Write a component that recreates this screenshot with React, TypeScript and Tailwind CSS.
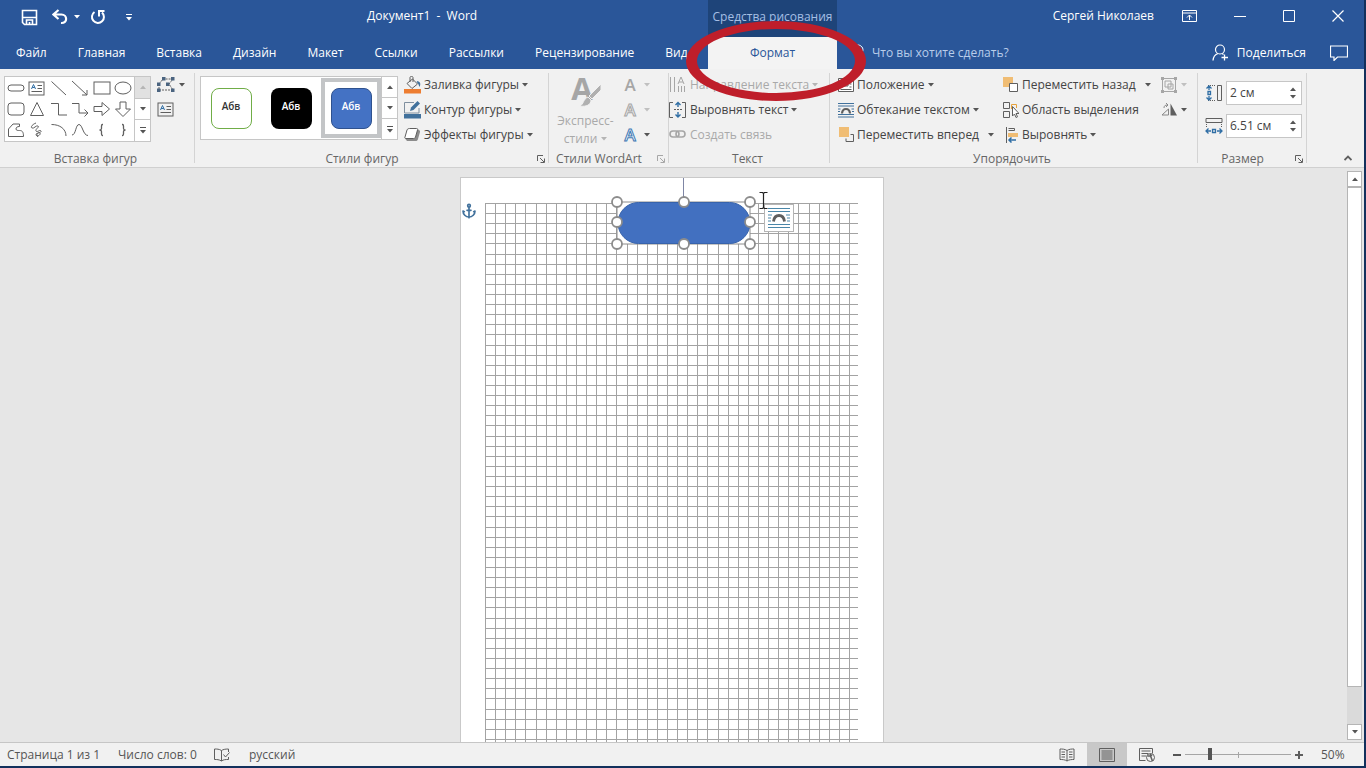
import { useState, type ReactNode } from 'react';
import { Anchor } from 'lucide-react';
import clsx from 'clsx';

const tabs = ['Главная', 'Вставка', 'Дизайн', 'Макет', 'Ссылки', 'Рассылки', 'Рецензирование', 'Вид'];

const GRID_STEP = 10.11;
const columns = Array.from({ length: 37 }, (_, i) => Math.round(i * GRID_STEP));
const rows = Array.from({ length: 54 }, (_, i) => Math.round(i * GRID_STEP));

const shapes: { name: string; draw: ReactNode }[] = [
  { name: 'Скругленный прямоугольник', draw: <rect x="1" y="6" width="16" height="6" rx="3" /> },
  {
    name: 'Надпись',
    draw: (
      <>
        <rect x="1" y="3" width="15" height="13" />
        <path d="M3.5 10 5.500 5.500 7.500 10M4.200 8.500h2.600" stroke="#2f6ea5" />
        <path d="M9.500 6.500h4.500M9.500 9.500h4.500M3.500 12.500h10.500" />
      </>
    ),
  },
  { name: 'Линия', draw: <path d="M1.500 2.500 16 16" /> },
  { name: 'Стрелка', draw: <path d="M1 2 16 16M16 11v5h-5" /> },
  { name: 'Прямоугольник', draw: <rect x="1" y="3" width="16" height="12" /> },
  { name: 'Овал', draw: <ellipse cx="9" cy="9" rx="8" ry="6" /> },
  { name: 'Прямоугольник 2', draw: <rect x="1" y="3" width="16" height="12" rx="3" /> },
  { name: 'Треугольник', draw: <path d="M9 2.500 15.500 15.500h-13z" /> },
  { name: 'Соединитель', draw: <path d="M1 3.500h7.500v11.500H17" /> },
  { name: 'Соединитель со стрелкой', draw: <path d="M1 3.500h7v9.500h9M13.500 9.500 17 13l-3.500 3.500" /> },
  { name: 'Стрелка вправо', draw: <path d="M1 6.500h8v-4l7.500 6.500L9 15.500v-4H1z" /> },
  { name: 'Стрелка вниз', draw: <path d="M6 2h6v7h4.500L9 16.500 1.500 9H6z" /> },
  {
    name: 'Полилиния',
    draw: <path d="M1.500 15.500V8L6 3h6.500v2.500c-2.500 0-3.500 1-3.500 2.500s2 1.500 3.500 1.500c2.500 0 4 1 4 6z" />,
  },
  {
    name: 'Рисованная кривая',
    draw: <path d="M8 2C5 3 2 6 4 7s4-3 6-2-3 3-2 5 4-2 5 0-6 2-5 4 5 0 4-2-5 1-2 4" />,
  },
  { name: 'Дуга', draw: <path d="M1.500 3.500C10 3.500 16 8 16 15" /> },
  { name: 'Кривая', draw: <path d="M1 14c4 0 3.500-10.500 7-10.500S12 14.500 17 14.500" /> },
  {
    name: 'Левая фигурная скобка',
    draw: <path d="M10 3.500H9.500Q8.500 3.500 8.500 5v2.500Q8.500 9 6.500 9 8.500 9 8.500 10.500V13q0 1.500 1 1.500h.5" strokeWidth="1.300" />,
  },
  {
    name: 'Правая фигурная скобка',
    draw: <path d="M8 3.500h.5q1 0 1 1.500v2.500Q9.500 9 11.500 9 9.500 9 9.500 10.500V13q0 1.500-1 1.500H8" strokeWidth="1.300" />,
  },
];

function Svg({ children, className = 'size-[18px]', box = '0 0 18 18' }: { children: ReactNode; className?: string; box?: string }) {
  return (
    <svg viewBox={box} className={clsx('shrink-0', className)} fill="none" stroke="#5f5f5f" aria-hidden="true">
      {children}
    </svg>
  );
}

function Caret({ className = 'text-[#555]' }: { className?: string }) {
  return (
    <svg viewBox="0 0 6 4" className={clsx('h-1 w-1.5 shrink-0', className)} fill="currentColor" aria-hidden="true">
      <path d="M0 0h6L3 3.500z" />
    </svg>
  );
}

function GalleryScroll({ name, dimUp }: { name: string; dimUp?: boolean }) {
  return (
    <div className="flex w-4 flex-col border-l border-[#c6c6c6]">
      <button
        aria-label={`${name}: вверх`}
        className={clsx('flex flex-1 items-center justify-center', dimUp ? 'bg-[#e1e1e1] text-[#b5b5b5]' : 'text-[#555]')}
      >
        <Caret className="rotate-180" />
      </button>
      <button aria-label={`${name}: вниз`} className="flex flex-1 items-center justify-center border-y border-[#c6c6c6]">
        <Caret />
      </button>
      <button aria-label={`${name}: еще`} className="flex flex-1 flex-col items-center justify-center gap-0.5">
        <span className="h-px w-1.5 bg-[#555]" />
        <Caret />
      </button>
    </div>
  );
}

function RibbonButton({ icon, label, caret, disabled, wide }: { icon: ReactNode; label: string; caret?: boolean; disabled?: boolean; wide?: boolean }) {
  return (
    <button
      disabled={disabled}
      className={clsx('flex h-6 items-center gap-[3px] whitespace-nowrap', disabled ? 'text-[#a9a9a9]' : 'text-[#444]')}
    >
      {icon}
      <span>{label}</span>
      {caret && <Caret className={clsx(disabled ? 'text-[#b5b5b5]' : 'text-[#555]', wide && 'ml-1.5')} />}
    </button>
  );
}

function Launcher({ dim }: { dim?: boolean }) {
  return (
    <button aria-label="Параметры группы" className={clsx('absolute right-1 bottom-1', dim && 'opacity-50')}>
      <Svg className="size-2" box="0 0 8 8">
        <path d="M.5 6V.5H6M3 3l4 4M7.500 3.500v4h-4" />
      </Svg>
    </button>
  );
}

function Group({ label, width, children, launcher }: { label: string; width: string; children: ReactNode; launcher?: 'on' | 'dim' }) {
  return (
    <section aria-label={label} className={clsx('relative flex shrink-0 flex-col pt-1', width)}>
      <div className="flex h-[78px]">{children}</div>
      <div className={clsx('text-center leading-4 whitespace-nowrap text-[#666]', launcher ? 'pr-5' : 'pr-1')}>{label}</div>
      {launcher && <Launcher dim={launcher === 'dim'} />}
      <span className="absolute top-1 right-0 bottom-1 w-px bg-[#d4d4d4]" />
    </section>
  );
}

function SizeField({ id, label, icon, initial }: { id: string; label: string; icon: ReactNode; initial: string }) {
  const [value, setValue] = useState(initial);
  return (
    <div className="flex items-center gap-[3px]">
      <label htmlFor={id} aria-label={label}>{icon}</label>
      <div className="flex h-6 w-[76px] border border-[#c6c6c6] bg-white">
        <input
          id={id}
          value={value}
          onChange={(e) => setValue(e.target.value)}
          className="w-[58px] bg-transparent pl-[3px] text-[#444] outline-none"
        />
        <div className="flex flex-1 flex-col items-center justify-evenly">
          <button aria-label={`${label}: больше`}><Caret className="rotate-180 text-[#555]" /></button>
          <button aria-label={`${label}: меньше`}><Caret /></button>
        </div>
      </div>
    </div>
  );
}

function TitleBar() {
  return (
    <header className="flex h-[69px] shrink-0 bg-[#2a5699] text-white">
      <div className="flex w-[708px] shrink-0 flex-col">
        <div className="flex h-8 items-center">
          <div className="flex w-[367px] items-center pt-0.5 pl-[21px]">
            <button aria-label="Сохранить">
              <Svg className="size-[17px]" box="0 0 17 17">
                <path d="M1.500 1.500h14v14h-12l-2-2zM1.500 8.500h14M5.500 15.500v-4.500h6v4.500M8.500 13v2.500" stroke="#fff" strokeWidth="1.600" />
              </Svg>
            </button>
            <button aria-label="Отменить" className="ml-3.5 flex items-center gap-1.5">
              <Svg className="size-4" box="0 0 16 16">
                <path d="M6.500 1 1.500 5.500l5 4.500M2 5.500h7.500c6 0 6.500 9-.5 8.500" stroke="#fff" strokeWidth="2.200" />
              </Svg>
              <Caret className="text-white" />
            </button>
            <button aria-label="Повторить" className="ml-2.5">
              <Svg className="size-4" box="0 0 16 16">
                <path d="M4.500 3a6 6 0 1 0 7.500.5M9 7.500V2h5.500" stroke="#fff" strokeWidth="2" />
              </Svg>
            </button>
            <button aria-label="Настройка панели быстрого доступа" className="ml-5 flex flex-col items-center gap-0.5">
              <span className="h-px w-1.5 bg-white" />
              <Caret className="text-white" />
            </button>
          </div>
          <h1 className="whitespace-pre">Документ1  -  Word</h1>
        </div>
        <nav className="flex h-[37px] items-center gap-[31px] pt-1 pl-4">
          <button>Файл</button>
          {tabs.map((tab) => (
            <button key={tab}>{tab}</button>
          ))}
        </nav>
      </div>

      <div className="relative flex w-[129px] shrink-0 flex-col bg-[#1e4479]">
        <div className="flex h-[37px] items-center justify-center pb-1 whitespace-nowrap text-[#a5bfe4]">Средства рисования</div>
        <button className="flex-1 bg-[#f3f3f3] text-[#2a5699]">Формат</button>
        <svg viewBox="0 0 180 80" className="pointer-events-none absolute top-[21px] -left-[22px] z-20 h-20 w-[180px]" aria-hidden="true">
          <path
            fill="#bf1e2a"
            fillRule="evenodd"
            d="M0 40a90 40 0 1 0 180 0a90 40 0 1 0-180 0zM11 40a79 32 0 1 0 158 0a79 32 0 1 0-158 0z"
          />
        </svg>
      </div>

      <div className="flex flex-1 flex-col">
        <div className="flex h-8 items-center justify-end pr-5">
          <span>Сергей Николаев</span>
          <button aria-label="Параметры отображения ленты" className="ml-7">
            <Svg className="h-3 w-[15px]" box="0 0 15 12">
              <path d="M.5.5h14v11H.5zM.5 3h14M7.500 10V5M5 7.500 7.500 5 10 7.500" stroke="#fff" />
            </Svg>
          </button>
          <button aria-label="Свернуть" className="ml-[37px]">
            <Svg className="h-3 w-3" box="0 0 12 12"><path d="M0 6.500h12" stroke="#fff" /></Svg>
          </button>
          <button aria-label="Развернуть" className="ml-[37px]">
            <Svg className="h-3 w-3" box="0 0 12 12"><path d="M.5.5h11v11H.5z" stroke="#fff" /></Svg>
          </button>
          <button aria-label="Закрыть" className="ml-[37px]">
            <Svg className="h-3 w-3" box="0 0 12 12"><path d="m.5.5 11 11M11.500.5l-11 11" stroke="#fff" strokeWidth="1.200" /></Svg>
          </button>
        </div>
        <div className="flex h-[37px] items-center pt-1 pr-4 pl-[15px]">
          <button className="flex items-center gap-2 text-[#b9cdea]">
            <Svg className="h-[18px] w-3" box="0 0 12 18">
              <path d="M3.500 13v-2.500C-1.500 6 2 1 6 1s7.500 5 2.500 9.500V13zM4 15.500h4" stroke="#fff" />
            </Svg>
            Что вы хотите сделать?
          </button>
          <button className="ml-auto flex items-center gap-2">
            <Svg className="size-[17px]" box="0 0 17 17">
              <circle cx="8" cy="5.500" r="4.500" stroke="#fff" strokeWidth="1.200" />
              <path d="M1 16.500c.3-4 2-6 5-7M10 9.500l1.500 1M12.500 10.500v6M9.500 13.500h6.500" stroke="#fff" strokeWidth="1.300" />
            </Svg>
            Поделиться
          </button>
          <button aria-label="Примечания" className="ml-6">
            <Svg className="h-4 w-[18px]" box="0 0 18 16">
              <path d="M.5 1h17v11H7.500L4 15.500V12H.5z" stroke="#fff" strokeWidth="1.200" />
            </Svg>
          </button>
        </div>
      </div>
    </header>
  );
}

function InsertShapes() {
  return (
    <Group label="Вставка фигур" width="w-[195px]">
      <div className="mt-[3px] ml-1 flex h-[66px] w-[147px] border border-[#c6c6c6] bg-white">
        <div className="grid flex-1 grid-cols-6 grid-rows-3">
          {shapes.map((shape) => (
            <button key={shape.name} aria-label={shape.name} className="flex items-center justify-center">
              <Svg>{shape.draw}</Svg>
            </button>
          ))}
        </div>
        <GalleryScroll name="Фигуры" dimUp />
      </div>
      <div className="ml-1.5 flex flex-col gap-1.5 pt-[3px]">
        <button aria-label="Изменить фигуру" className="flex items-center gap-1">
          <Svg>
            <path d="M2 8 6 3h10l-4 5 4 6H2z" strokeDasharray="2 1" />
            <path d="M0 6.500h3.500V10H0zM5 1h3.500v3.500H5zM14 1h3.500v3.500H14zM9 6.500h3.500V10H9zM0 12.500h3.500V16H0zM14 12.500h3.500V16H14z" fill="#4b6480" stroke="none" />
          </Svg>
          <Caret />
        </button>
        <button aria-label="Нарисовать надпись"><Svg>{shapes[1].draw}</Svg></button>
      </div>
    </Group>
  );
}

function ShapeStyles() {
  return (
    <Group label="Стили фигур" width="w-[354px]" launcher="on">
      <div className="mt-[3px] ml-[5px] flex h-16 w-[198px] border border-[#c6c6c6] bg-white">
        <div className="flex flex-1 items-center text-[10px] font-semibold">
          <button className="flex h-[60px] w-[60px] items-center justify-center">
            <span className="flex size-[41px] items-center justify-center rounded-lg border border-[#70ad47] pb-1 text-[#333]">Абв</span>
          </button>
          <button className="flex h-[60px] w-[60px] items-center justify-center">
            <span className="flex size-[41px] items-center justify-center rounded-lg bg-black pb-1 text-white">Абв</span>
          </button>
          <button aria-pressed="true" className="flex h-[60px] w-[60px] items-center justify-center border-4 border-[#c3c5c7]">
            <span className="flex size-[41px] items-center justify-center rounded-lg border border-[#2f528f] bg-[#4472c4] pb-1 text-white">Абв</span>
          </button>
        </div>
        <GalleryScroll name="Стили" />
      </div>
      <div className="ml-[6px] flex flex-col gap-px">
        <RibbonButton
          label="Заливка фигуры"
          caret
          icon={
            <Svg className="h-[18px] w-[17px]" box="0 0 17 18">
              <path d="M3 7.500 8.500 3l5 5L8 12.500zM6 6V1.500c0-1.500 3-1.500 3 0V6" />
              <path d="M13.500 5c3 1 3.500 3 2 6-1-2-1-4-3-5z" fill="#41719c" stroke="none" />
              <path d="M0 13h17v4.500H0z" fill="#ed7d31" stroke="none" />
            </Svg>
          }
        />
        <RibbonButton
          label="Контур фигуры"
          caret
          icon={
            <Svg className="h-[18px] w-[17px]" box="0 0 17 18">
              <path d="M10 1.500H.500v10.500H15V7" stroke="#7f8f9f" />
              <path d="m6 10 1-3.500L13.500 0l2.500 2.500L9.500 9z" fill="#41719c" stroke="none" />
              <path d="M0 13h17v4.500H0z" fill="#41719c" stroke="none" />
            </Svg>
          }
        />
        <RibbonButton
          label="Эффекты фигуры"
          caret
          icon={
            <Svg className="h-[18px] w-[17px]" box="0 0 17 18">
              <path d="M1 12.500 3 15h8.500c1.500 0 2-.5 2.500-2l2-7c.3-1-.5-2-2-2.500z" fill="#8c8c8c" stroke="none" />
              <path d="M5.500 2.500h7c1 0 1.500.5 1 1.500l-2 7c-.3 1-1 1.500-2 1.500H2c-1 0-1.500-.5-1-1.500l2-7c.3-1 1.500-1.500 2.500-1.500z" fill="#fff" />
            </Svg>
          }
        />
      </div>
    </Group>
  );
}

function LetterIcon({ fill, stroke }: { fill: string; stroke: string }) {
  return (
    <svg viewBox="0 0 16 16" className="size-4 overflow-visible" aria-hidden="true">
      <text x="8" y="14" textAnchor="middle" fontSize="17" fontWeight="600" fill={fill} stroke={stroke}>A</text>
    </svg>
  );
}

function WordArtStyles() {
  return (
    <Group label="Стили WordArt" width="w-[120px]" launcher="dim">
      <button disabled className="flex w-[73px] flex-col items-center pt-[3px] leading-[18px] text-[#a9a9a9]">
        <svg viewBox="0 0 32 32" className="size-8 overflow-visible" aria-hidden="true">
          <text x="12" y="24" textAnchor="middle" fontSize="31" fontWeight="700" fill="#a6a6a6">A</text>
          <path d="M31 8v6l-9 9-3-3zM18 21l3 3c0 5-5 7-11 6 4-2 3-7 8-9z" fill="#b0b0b0" stroke="#f1f1f1" />
        </svg>
        <span className="mt-1">Экспресс-</span>
        <span className="flex items-center gap-1">стили <Caret className="text-[#b5b5b5]" /></span>
      </button>
      <div className="flex flex-col gap-px">
        <button disabled aria-label="Заливка текста" className="flex h-6 items-center gap-1.5">
          <LetterIcon fill="#a6a6a6" stroke="none" /><Caret className="text-[#c0c0c0]" />
        </button>
        <button disabled aria-label="Контур текста" className="flex h-6 items-center gap-1.5">
          <LetterIcon fill="#f1f1f1" stroke="#a6a6a6" /><Caret className="text-[#c0c0c0]" />
        </button>
        <button aria-label="Текстовые эффекты" className="flex h-6 items-center gap-1.5">
          <LetterIcon fill="#fff" stroke="#3c78b4" /><Caret />
        </button>
      </div>
    </Group>
  );
}

function TextGroup() {
  return (
    <Group label="Текст" width="w-[161px]">
      <div className="flex flex-col gap-px">
        <RibbonButton
          label="Направление текста"
          caret
          disabled
          icon={
            <Svg>
              <path d="M1.500 1v15M5.500 1v15M9.500 10v6M12.500 10v6M15.500 10v6M9 8l3-7 3 7M10 6h4" stroke="#a6a6a6" />
            </Svg>
          }
        />
        <RibbonButton
          label="Выровнять текст"
          caret
          icon={
            <Svg>
              <path d="M4 1.500H.500v15H4M13 1.500h3.500v15H13" />
              <path d="M5 8.500h8" strokeDasharray="2 1" />
              <path d="M9 2v4M9 11v5M6.500 4 9 1.500 11.500 4M6.500 13.500 9 16l2.500-2.500" stroke="#2f6ea5" strokeWidth="1.400" />
            </Svg>
          }
        />
        <RibbonButton
          label="Создать связь"
          disabled
          icon={
            <Svg>
              <rect x="1" y="5" width="9" height="6" rx="3" stroke="#a6a6a6" strokeWidth="1.600" />
              <rect x="7" y="5" width="9" height="6" rx="3" stroke="#a6a6a6" strokeWidth="1.600" />
            </Svg>
          }
        />
      </div>
    </Group>
  );
}

function Arrange() {
  return (
    <Group label="Упорядочить" width="w-[368px]">
      <div className="ml-2 flex w-[165px] flex-col gap-px">
        <RibbonButton
          label="Положение"
          caret
          icon={
            <Svg className="size-4" box="0 0 16 16">
              <path d="M.5 1.500h15v13H.5z" fill="#fff" />
              <path d="M2.500 4h2M11.500 4h2M2.500 7h2M11.500 7h2M2.500 10h2M11.500 10h2M2.500 12.500h11" />
              <path d="M6 4h4v5H6z" />
            </Svg>
          }
        />
        <RibbonButton
          label="Обтекание текстом"
          caret
          icon={
            <Svg className="size-4" box="0 0 16 16">
              <path d="M0 1.500h16M0 4h16M0 12.500h16M0 15h16M0 7h2.500M13.500 7H16M0 9.500h2M14 9.500h2" stroke="#41719c" />
              <path d="M4 11.500c.5-6 7.500-6 8 0" strokeWidth="2.200" />
            </Svg>
          }
        />
        <RibbonButton
          label="Переместить вперед"
          caret
          wide
          icon={
            <Svg className="size-4" box="0 0 16 16">
              <path d="M1 0h10v10H1z" fill="#f0bd74" stroke="none" />
              <path d="M12.500 7.500h3v7H8V11.500" />
            </Svg>
          }
        />
      </div>
      <div className="flex w-[158px] flex-col gap-px">
        <RibbonButton
          label="Переместить назад"
          caret
          wide
          icon={
            <Svg className="size-4" box="0 0 16 16">
              <path d="M0 0h10v10H0z" fill="#f0bd74" stroke="none" />
              <path d="M6.500 6.500h8v8h-8z" fill="#fff" />
            </Svg>
          }
        />
        <RibbonButton
          label="Область выделения"
          icon={
            <Svg className="size-4" box="0 0 16 16">
              <path d="M.5.500h6v6h-6zM.5 9.500h6v6h-6z" />
              <path d="M8.500 7V2.500h5V6" stroke="#e8a33d" />
              <path d="M9.500 4.500v9.500l2-2 1.500 3.500 1.500-.7-1.500-3.300h3z" fill="#fff" />
            </Svg>
          }
        />
        <RibbonButton
          label="Выровнять"
          caret
          icon={
            <Svg className="size-4" box="0 0 16 16">
              <path d="M3.500 0v16M5.500 1.500h6v2h-6" />
              <path d="M5 6h10v4H5z" fill="#f0bd74" stroke="none" />
              <path d="M13 13H6M8.500 10.500 6 13l2.500 2.500" stroke="#2f6ea5" strokeWidth="1.500" />
            </Svg>
          }
        />
      </div>
      <div className="flex flex-col gap-px">
        <button disabled aria-label="Группировать" className="flex h-6 items-center gap-1">
          <Svg className="size-4" box="0 0 16 16">
            <path d="M1.500 1.500h13v13h-13zM4 4h6v6H4zM7 7h5v5H7z" stroke="#a6a6a6" />
            <path d="M0 0h3v3H0zM13 0h3v3h-3zM0 13h3v3H0zM13 13h3v3h-3z" fill="#a6a6a6" stroke="none" />
          </Svg>
          <Caret className="text-[#c0c0c0]" />
        </button>
        <button aria-label="Повернуть" className="flex h-6 items-center gap-1">
          <Svg className="size-4" box="0 0 16 16">
            <path d="M9.500 1.500 16 13.500H9.500z" fill="#5f5f5f" stroke="none" />
            <path d="M1 13h6.500V7zM3 6c0-2 1-3 3.500-3M5 1l2 2-2 2" stroke="#888" />
          </Svg>
          <Caret />
        </button>
      </div>
    </Group>
  );
}

function SizeGroup() {
  return (
    <Group label="Размер" width="w-[109px]" launcher="on">
      <div className="ml-[7px] flex flex-col gap-[9px] pt-2">
        <SizeField
          id="height"
          label="Высота фигуры"
          initial="2 см"
          icon={
            <Svg>
              <path d="M12.500 1.500h4v15h-4z" />
              <path d="M3 1.500h8M3 16.500h8" strokeDasharray="1 1" />
              <path d="M4 2v4M4 12v4M1.500 4.500 4 2l2.500 2.500M1.500 13.500 4 16l2.500-2.500M3 7.500h2.500v3H3z" stroke="#2f6ea5" strokeWidth="1.300" />
            </Svg>
          }
        />
        <SizeField
          id="width"
          label="Ширина фигуры"
          initial="6.51 см"
          icon={
            <Svg>
              <path d="M1 1.500h16v4H1z" />
              <path d="M1.500 7v4M16.500 7v4" strokeDasharray="1 1" />
              <path d="M1 14h5M12 14h5M3.500 11.500 1 14l2.500 2.500M14.500 11.500 17 14l-2.500 2.500M7.500 12.500h3v3h-3z" stroke="#2f6ea5" strokeWidth="1.300" />
            </Svg>
          }
        />
      </div>
    </Group>
  );
}

function SelectedShape() {
  const handles = [[7, 7], [74, 7], [140, 7], [7, 27], [140, 27], [7, 49], [74, 49], [140, 49]];
  return (
    <svg viewBox="0 0 148 80" className="absolute top-0 left-[149px] h-20 w-[148px]" aria-label="Фигура">
      <path d="M73.500 0v24" stroke="#7f86a5" />
      <g transform="translate(0 17)">
        <rect x="7" y="7" width="133" height="42" fill="#fff" stroke="#8c8c8c" />
        <rect x="8" y="7.500" width="132" height="41" rx="20.500" fill="#4270c0" stroke="#3763ab" />
        {handles.map(([x, y]) => (
          <circle key={`${x}-${y}`} cx={x} cy={y} r="5" fill="#fff" stroke="#8c8c8c" strokeWidth="1.800" />
        ))}
      </g>
    </svg>
  );
}

function Document() {
  return (
    <article className="relative mx-auto mt-[9px] w-[424px] shrink-0 overflow-hidden border border-b-0 border-[#c9c9c9] bg-white pt-[25px] pl-[24px]">
      <svg width="375" height="600" className="block" shapeRendering="crispEdges" stroke="#a3a3a3" aria-label="Сетка">
        {columns.map((x) => (
          <path key={x} d={`M${x + 0.5} 0V600`} />
        ))}
        {rows.map((y) => (
          <path key={y} d={`M0 ${y + 0.5}H373`} />
        ))}
      </svg>
      <Anchor className="absolute top-[25px] left-0 size-4 text-[#41719c]" strokeWidth={2.5} />
      <SelectedShape />
      <button aria-label="Параметры разметки" className="absolute top-[26px] left-[303px] flex h-7 w-[30px] items-center justify-center border border-[#b5b5b5] bg-white">
        <Svg className="h-[22px] w-[22px]" box="0 0 22 22">
          <path d="M0 1.500h22M0 4.500h22M0 17.500h22M0 20.500h22M0 8h4M18 8h4M0 11h3M19 11h3M0 14h3M19 14h3" stroke="#4a86a8" />
          <path d="M5.500 14.500c1-8 10-8 11 0" strokeWidth="2.800" />
        </Svg>
      </button>
      <svg viewBox="0 0 9 17" className="absolute top-[14px] left-[298px] h-[17px] w-[9px]" fill="none" stroke="#222" aria-hidden="true">
        <path d="M.5.500h3l1 1 1-1h3M4.500 1v15M.5 16.500h3l1-1 1 1h3" strokeWidth="1.200" />
      </svg>
    </article>
  );
}

function StatusBar() {
  const [zoom, setZoom] = useState(23);
  return (
    <footer className="flex h-6 shrink-0 items-center border-t border-[#c6c6c6] bg-[#f1f1f1] pl-[7px] text-[#555]">
      <span className="w-[111px]">Страница 1 из 1</span>
      <span className="w-24">Число слов: 0</span>
      <button aria-label="Правописание" className="w-[35px]">
        <Svg className="h-[14px] w-4" box="0 0 16 14">
          <path d="M7.500 2.500C5 1 3 1 .5 1v10.500c2.500 0 4.500 0 7 1.500zM7.500 2.500C9 1.500 11 1 14.500 1v3M7.500 13c2-1.500 4-1.500 7-1.500V9M9.500 6.500 11.500 9 15.500 4.500" />
        </Svg>
      </button>
      <span>русский</span>
      <div className="ml-auto flex h-full items-center">
        <button aria-label="Режим чтения" className="flex h-full w-10 items-center justify-center">
          <Svg className="h-[14px] w-4" box="0 0 16 14">
            <path d="M8 2.500C6 1 3 1 1 1v10.500c2 0 5 0 7 1.500 2-1.500 5-1.500 7-1.500V1c-2 0-5 0-7 1.500zM8 2.500V13M2.500 4H6M2.500 6.500H6M2.500 9H6M10 4h3.500M10 6.500h3.500M10 9h3.500" />
          </Svg>
        </button>
        <button aria-label="Разметка страницы" aria-pressed="true" className="flex h-full w-10 items-center justify-center bg-[#c8c8c8]">
          <Svg className="h-[14px] w-4" box="0 0 16 14">
            <path d="M.5.500h15v13H.500zM2.500 3h11M2.500 5h11M2.500 7h11M2.500 9h11M2.500 11h11" />
          </Svg>
        </button>
        <button aria-label="Веб-документ" className="flex h-full w-10 items-center justify-center">
          <Svg className="h-[14px] w-4" box="0 0 16 14">
            <path d="M6.500 12.500h-6V.500h13v5M2.500 3h9M2.500 5.500h7M2.500 8H7" />
            <circle cx="11.500" cy="9.500" r="4" fill="#f1f1f1" />
            <path d="M8.500 8h3l2 5M11 6l2 2" strokeWidth="1.500" />
          </Svg>
        </button>
        <button aria-label="Уменьшить" className="ml-1.5 h-0.5 w-2 bg-[#555]" />
        <div className="relative mx-1 flex w-[106px] items-center">
          <span className="absolute left-[53px] h-1.5 w-px bg-[#a6a6a6]" />
          <input
            type="range"
            aria-label="Масштаб"
            value={zoom}
            onChange={(e) => setZoom(Number(e.target.value))}
            className="h-3 w-full appearance-none bg-transparent [&::-webkit-slider-runnable-track]:h-px [&::-webkit-slider-runnable-track]:bg-[#a6a6a6] [&::-webkit-slider-thumb]:-mt-1.5 [&::-webkit-slider-thumb]:h-3 [&::-webkit-slider-thumb]:w-1 [&::-webkit-slider-thumb]:appearance-none [&::-webkit-slider-thumb]:bg-[#555]"
          />
        </div>
        <button aria-label="Увеличить">
          <Svg className="size-2" box="0 0 8 8"><path d="M4 0v8M0 4h8" strokeWidth="2" /></Svg>
        </button>
        <span className="w-[61px] pl-[18px]">50%</span>
      </div>
    </footer>
  );
}

export default function App() {
  return (
    <div className="flex h-screen flex-col overflow-hidden bg-[#12305c] pr-0.5 pb-0.5 font-['Open_Sans','Noto_Sans',sans-serif] text-[12px]">
      <TitleBar />
      <div className="flex h-[99px] shrink-0 border-b border-[#d0d0d0] bg-[#f1f1f1]">
        <InsertShapes />
        <ShapeStyles />
        <WordArtStyles />
        <TextGroup />
        <Arrange />
        <SizeGroup />
        <button aria-label="Свернуть ленту" className="mt-auto mr-3 mb-1.5 ml-auto">
          <Svg className="h-1.5 w-2" box="0 0 8 6"><path d="m.5 5L4 1.500 7.500 5" strokeWidth="1.800" /></Svg>
        </button>
      </div>
      <main className="flex min-h-0 flex-1 bg-[#e6e6e6]">
        <div className="flex min-w-0 flex-1 pr-1">
          <Document />
        </div>
        <div className="mt-[3px] mr-0.5 mb-0.5 flex w-[15px] flex-col bg-[#dadada]">
          <button aria-label="Прокрутить вверх" className="flex h-4 items-center justify-center border border-[#b5b5b5] bg-white">
            <Caret className="rotate-180 text-[#555]" />
          </button>
          <div className="h-[500px] border border-[#b5b5b5] bg-white" />
          <button aria-label="Прокрутить вниз" className="mt-auto flex h-4 items-center justify-center border border-[#b5b5b5] bg-white">
            <Caret />
          </button>
        </div>
      </main>
      <StatusBar />
    </div>
  );
}
